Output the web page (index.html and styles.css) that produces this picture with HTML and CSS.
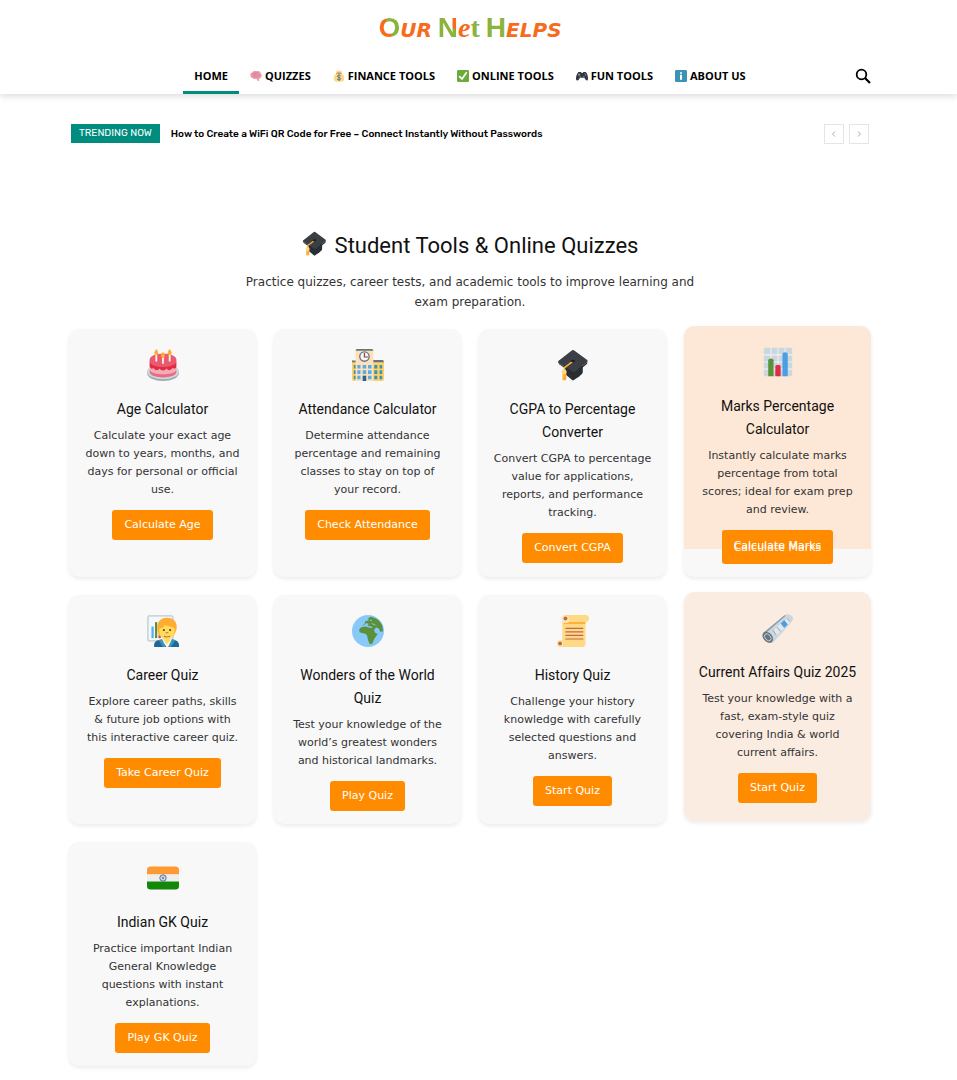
FILE: index.html
```
<!DOCTYPE html>
<html lang="en">
<head>
    <meta charset="UTF-8">
    <meta name="viewport" content="width=device-width, initial-scale=1.0">
    <title>Our Net Helps</title>
    <link rel="stylesheet" href="styles.css">
</head>
<body>
    <!-- Shared icons -->
    <svg class="sprite" aria-hidden="true">
        <symbol id="cap" viewBox="0 0 36 36">
            <path fill="#292f33" d="M9 20l9-6 11 5v7c0 2-2 3-4 5l-6 4q-1 1-2 0l-8-7z"/>
            <path fill="#3a3f45" d="M1.500 13.500 17 1.500q1-1 2 0l15 11q1 1 0 2L20 26q-1 1-2 0L2 16q-1.500-1-.5-2.500z"/>
            <path fill="#292f33" d="M2 16l16 10q1 1 2 0l14-11.500v2L20 28q-1 1-2 0L2 17z"/>
            <path fill="none" stroke="#ffac33" stroke-width="1.800" stroke-linecap="round" stroke-linejoin="round" d="M17 14.500 8.500 21v5"/>
            <path fill="#ffac33" d="M6.500 25h4v9q-2 2.500-4.500.500z"/>
            <circle cx="8" cy="26" r="2.800" fill="#ffd983"/>
            <ellipse cx="18" cy="13.500" rx="2.500" ry="1.500" fill="#1d2125"/>
        </symbol>
    </svg>

    <header class="header">
        <a class="logo" href="#"><span class="logo-o">O</span><span class="logo-small">UR</span> <span class="logo-n">N</span><span class="logo-e">e</span><span class="logo-t">t</span> <span class="logo-h">H</span><span class="logo-small">ELPS</span></a>
        <div class="menu-bar">
            <nav class="menu">
                <a class="active" href="#">HOME</a>
                <a href="#">
                    <svg viewBox="0 0 36 36"><path fill="#ea9aaa" d="M3 22C-1 16 1 9 7 7c3-5 9-5 13-3 6-2 11 1 12 6 4 4 4 9 1 12-1 4-4 5-7 4l2 6-5 1-4-7c-6 2-9 1-11-2-3 0-5-1-5-2z"/><path fill="none" stroke="#c56c83" stroke-width="2" d="M7 13c4-3 6 1 9-1s5-5 8-2M10 20c5-4 8 0 12-2s5-4 8-2M14 7l3 3"/></svg>
                    QUIZZES
                </a>
                <a href="#">
                    <svg viewBox="0 0 36 36"><path fill="#fdd888" d="M12 9C3 14 1 22 3 29c1 5 6 6 15 6s14-1 15-6c2-7 0-15-9-20l3-7-5 1-4-3-4 3-5-1z"/><path fill="#bf6952" d="M10 8h16v3H10z"/><path fill="none" stroke="#67757f" stroke-width="3" d="M23 18c-2-3-10-3-10 1s10 3 10 7-8 5-11 1M18 13v20"/></svg>
                    FINANCE TOOLS
                </a>
                <a href="#">
                    <svg viewBox="0 0 36 36"><rect width="36" height="36" rx="4" fill="#6aab3a"/><path fill="none" stroke="#fff" stroke-width="5" stroke-linecap="round" d="M8 20l7 7L28 8"/></svg>
                    ONLINE TOOLS
                </a>
                <a href="#">
                    <svg viewBox="0 0 36 36"><path fill="#31373d" d="M8 6h7l2 3h3l2-3h7c4 2 7 12 7 20 0 7-5 6-7 3l-4-6H12l-4 6c-3 4-8 3-8-3C0 18 4 8 8 6z"/><path stroke="#a9b5bd" stroke-width="2" d="M6 14h7M9 10v8"/><circle cx="26" cy="11" r="2" fill="#dd2e44"/><circle cx="29" cy="15" r="2" fill="#55acee"/><circle cx="13" cy="21" r="3" fill="#66757f"/><circle cx="23" cy="21" r="3" fill="#66757f"/></svg>
                    FUN TOOLS
                </a>
                <a href="#">
                    <svg viewBox="0 0 36 36"><rect width="36" height="36" rx="4" fill="#3b94b5"/><circle cx="18" cy="9" r="3" fill="#fff"/><path fill="#fff" d="M15 14h6v15h-6z"/></svg>
                    ABOUT US
                </a>
            </nav>
            <button class="search" type="button" aria-label="Search">
                <svg viewBox="0 0 16 16"><circle cx="6.500" cy="6.500" r="4.800" fill="none" stroke="#000" stroke-width="1.800"/><path stroke="#000" stroke-width="2.200" d="M10 10l5 5"/></svg>
            </button>
        </div>
    </header>

    <main class="content">
        <section class="trending">
            <span class="trending-label">TRENDING NOW</span>
            <a class="trending-title" href="#">How to Create a WiFi QR Code for Free – Connect Instantly Without Passwords</a>
            <div class="trending-nav">
                <button type="button" aria-label="Previous"><svg viewBox="0 0 8 8"><path d="M5 1.500 2.500 4 5 6.500"/></svg></button>
                <button type="button" aria-label="Next"><svg viewBox="0 0 8 8"><path d="M3 1.500 5.500 4 3 6.500"/></svg></button>
            </div>
        </section>

        <section class="tools">
            <h2><svg aria-hidden="true"><use href="#cap"/></svg>Student Tools &amp; Online Quizzes</h2>
            <p class="intro">Practice quizzes, career tests, and academic tools to improve learning and exam preparation.</p>

            <div class="grid">
                <article class="card">
                    <svg class="icon" viewBox="0 0 36 36">
                        <ellipse cx="18" cy="27" rx="18" ry="9" fill="#9aaab4"/>
                        <ellipse cx="18" cy="25.500" rx="18" ry="8.500" fill="#ccd6dd"/>
                        <path fill="#f4abba" d="M3 14h30v12c0 8-30 8-30 0z"/>
                        <path fill="#dd2e44" d="M3 24v2c0 8 30 8 30 0v-2c-3 6-27 6-30 0z" opacity=".5"/>
                        <path fill="#dd2e44" d="M3 15v5c1 2 3 3 4 1 2 3 5 4 7 1 2 3 6 3 8 0 2 3 5 2 7-1 2 2 4 1 4-2v-4c-5 6-25 6-30 0z"/>
                        <path fill="#ea596e" d="M3 12v3c3 7 27 7 30 0v-3z"/>
                        <ellipse cx="18" cy="12" rx="15" ry="7" fill="#ea596e"/>
                        <path stroke="#fff8e8" stroke-width="2" d="M10.500 6v8M18 8.500v8M25.500 6v8"/>
                        <path fill="#ffac33" d="M10.500 0C8 3 7 6 10.500 7 14 6 13 3 10.500 0zM18 3c-2.500 3-3.500 6 0 7 3.500-1 2.500-4 0-7zM25.500 0C23 3 22 6 25.500 7 29 6 28 3 25.500 0z"/>
                    </svg>
                    <h3>Age Calculator</h3>
                    <p>Calculate your exact age down to years, months, and days for personal or official use.</p>
                    <a class="btn" href="#">Calculate Age</a>
                </article>

                <article class="card">
                    <svg class="icon" viewBox="0 0 36 36">
                        <path fill="#ffd164" d="M0 14h36v20q0 2-2 2H2q-2 0-2-2z"/>
                        <path fill="#ffe0b8" d="M4 1h20v35H4z"/>
                        <path fill="#67757f" d="M5 0h18l1 2H4zM0 13h4v2H0zM24 12.500h11l1 2.500H24z"/>
                        <circle cx="14" cy="8.500" r="6" fill="#67757f"/><circle cx="14" cy="8.500" r="4.500" fill="#f5f8fa"/>
                        <path fill="none" stroke="#8b4a3a" stroke-width="1.400" d="M14 4.500v4.500h4"/>
                        <path fill="#55acee" d="M6 18h3.500v4H6zM12 18h4v4h-4zM18 18h4v4h-4zM6 24h3.500v4H6zM12 24h4v4h-4zM18 24h4v4h-4zM6 30h3.500v4H6zM18 30h4v4h-4z"/>
                        <path fill="#3b94b5" d="M2 18h2v4H2zM2 24h2v4H2zM2 30h2v4H2zM25 18h3.500v4H25zM31 18h3v4h-3zM25 24h3.500v4H25zM31 24h3v4h-3zM25 30h3.500v4H25zM31 30h3v4h-3z"/>
                        <path fill="#226699" d="M12 30h4v6h-4z"/>
                    </svg>
                    <h3>Attendance Calculator</h3>
                    <p>Determine attendance percentage and remaining classes to stay on top of your record.</p>
                    <a class="btn" href="#">Check Attendance</a>
                </article>

                <article class="card">
                    <svg class="icon"><use href="#cap"/></svg>
                    <h3>CGPA to Percentage Converter</h3>
                    <p>Convert CGPA to percentage value for applications, reports, and performance tracking.</p>
                    <a class="btn" href="#">Convert CGPA</a>
                </article>

                <article class="card card-marks">
                    <svg class="icon" viewBox="0 0 36 36">
                        <rect x="2" y="2" width="32" height="32" rx="2" fill="#ccd6dd"/>
                        <path stroke="#edf2f5" stroke-width="1.200" d="M2 10h32M2 18h32M2 26h32M10 2v32M18 2v32M26 2v32"/>
                        <path fill="#5c913b" d="M7 34V16q0-2 3-2t3 2v18z"/>
                        <path fill="#dd2e44" d="M15 34V23q0-2 3-2t3 2v11z"/>
                        <path fill="#4a9fe3" d="M23 34V9q0-2 3-2t3 2v25z"/>
                    </svg>
                    <h3>Marks Percentage Calculator</h3>
                    <p>Instantly calculate marks percentage from total scores; ideal for exam prep and review.</p>
                    <a class="btn" href="#">Calculate Marks</a>
                </article>

                <article class="card">
                    <svg class="icon" viewBox="0 0 36 36">
                        <rect x="1" y="1" width="28" height="28" rx="2" fill="#f5f8fa" stroke="#ccd6dd" stroke-width="2"/>
                        <path fill="#55acee" d="M5 13h2.500v13H5z"/><path fill="#5c913b" d="M9 8h2.500v18H9z"/><path fill="#dd2e44" d="M13 22h2.500v4H13z"/>
                        <path fill="#226699" d="M8 36v-3q1-5 7-5h14q6 0 7 5v3z"/>
                        <path fill="#f5f8fa" d="M16 28l6 8h2l5-8z"/>
                        <path fill="#ffdc5d" d="M19 23h7v6l-3.500 4-3.500-4z"/>
                        <path fill="#3b94b5" d="M13 28l5 8h3l-4-9zM32 28l-5 8h-3l4-9z"/>
                        <path fill="#ffac33" d="M12 19C10 8 15 3 22 3c8 0 13 5 11 14l-3 7H14z"/>
                        <path fill="#ffdc5d" d="M14 15c4 0 5-2 6-4 3 2 8 2 11 4 1 7-3 13-8.500 13S13 23 14 15z"/>
                        <circle cx="19" cy="17" r="1.200" fill="#664500"/><circle cx="26" cy="17" r="1.200" fill="#664500"/>
                        <path fill="none" stroke="#c1694f" stroke-width="1.200" d="M21 20h3M19 24q3.500 1.500 7 0"/>
                    </svg>
                    <h3>Career Quiz</h3>
                    <p>Explore career paths, skills &amp; future job options with this interactive career quiz.</p>
                    <a class="btn" href="#">Take Career Quiz</a>
                </article>

                <article class="card">
                    <svg class="icon" viewBox="0 0 36 36">
                        <circle cx="18" cy="18" r="18" fill="#88c9f9"/>
                        <path fill="#5c913b" d="M8 17c1-3 4-4 7-4l4 1 5 1 2 5 3 1-4 6-2 5-3 1-2-5-1-5-2-2-5-1c-2-1-2-2-2-3zM14 10l1-3 4-1-1-2 3-2c6 1 11 5 13 10l1 6-3 1-2-4-3-1-2 3-3-4-5-1 2-2-3-1-2 2-3 1z"/>
                        <path fill="#88c9f9" d="M20 5l3 1-2 1zM21 9l4 1 3 2-4-1zM26 16l3 4-1 1z"/>
                    </svg>
                    <h3>Wonders of the World Quiz</h3>
                    <p>Test your knowledge of the world’s greatest wonders and historical landmarks.</p>
                    <a class="btn" href="#">Play Quiz</a>
                </article>

                <article class="card">
                    <svg class="icon" viewBox="0 0 36 36">
                        <path fill="#ffd983" d="M6 4q0-4 4-4h22q4 0 4 4t-4 4v24q0 4-4 4H4q-4 0-4-4t4-4h2z"/>
                        <path fill="#ffac33" d="M8 8h24v2H8z"/><path fill="#ffe8b6" d="M6 5q0 4 4 4t4-4-4-4-4 4zM0 32q0 3.500 3.500 3.500T7 32t-3.500-3.500T0 32z"/>
                        <circle cx="9.500" cy="4" r="2.200" fill="#c1694f"/><circle cx="3.500" cy="32" r="2.200" fill="#c1694f"/>
                        <path stroke="#c1694f" stroke-width="1.400" stroke-linecap="round" d="M10 15h19M10 19h19M10 23h19M10 27h19"/>
                    </svg>
                    <h3>History Quiz</h3>
                    <p>Challenge your history knowledge with carefully selected questions and answers.</p>
                    <a class="btn" href="#">Start Quiz</a>
                </article>

                <article class="card card-hover">
                    <svg class="icon" viewBox="0 0 36 36">
                        <path fill="#ccd6dd" d="M1 24 25 4q3-2 6-1 4 1 4 5-1 3-3 5L13 34q-3 2-8-1-6-4-4-9z"/>
                        <path fill="#8899a6" d="M1 24 25 4l2 0L4 24z"/>
                        <path fill="#e1e8ed" d="M12 21 28 7l5 4-17 16z"/>
                        <ellipse cx="6.500" cy="28.500" rx="5" ry="7" transform="rotate(-42 6.500 28.500)" fill="#67757f"/>
                        <ellipse cx="6.500" cy="28.500" rx="3" ry="4.500" transform="rotate(-42 6.500 28.500)" fill="none" stroke="#ccd6dd"/>
                        <path fill="#4a9fe3" d="M21 13l4-4 4 5-4 4z"/>
                        <path stroke="#8899a6" stroke-width="1" d="M12 20l4 6M17 17l4 5M28 7l4 4"/>
                    </svg>
                    <h3>Current Affairs Quiz 2025</h3>
                    <p>Test your knowledge with a fast, exam-style quiz covering India &amp; world current affairs.</p>
                    <a class="btn" href="#">Start Quiz</a>
                </article>

                <article class="card">
                    <svg class="icon" viewBox="0 0 36 36">
                        <path fill="#ff9933" d="M0 14V9q0-4 4-4h28q4 0 4 4v5z"/>
                        <path fill="#eee" d="M0 14h36v8H0z"/>
                        <path fill="#138808" d="M0 22h36v5q0 4-4 4H4q-4 0-4-4z"/>
                        <circle cx="18" cy="18" r="3.600" fill="none" stroke="#3c5f91"/>
                        <circle cx="18" cy="18" r="1.300" fill="#3c5f91"/>
                        <path stroke="#8ea3c2" stroke-width=".5" d="M18 14.500v7M14.500 18h7M15.500 15.500l5 5M20.500 15.500l-5 5"/>
                    </svg>
                    <h3>Indian GK Quiz</h3>
                    <p>Practice important Indian General Knowledge questions with instant explanations.</p>
                    <a class="btn" href="#">Play GK Quiz</a>
                </article>
            </div>
        </section>
    </main>
</body>
</html>
```

FILE: styles.css
```
* {
    box-sizing: border-box;
}
body {
    margin: 0;
    background-color: #fff;
    font-family: Verdana, "DejaVu Sans", sans-serif;
    color: #333;
}
a {
    color: inherit;
    text-decoration: none;
}
h2, h3, p {
    margin: 0;
}
.sprite {
    display: none;
}

/* Header */
.header {
    padding: 0 86px 0 69px;
    box-shadow: 0 3px 6px rgba(0, 0, 0, 0.12);
}
.logo {
    display: flex;
    justify-content: center;
    align-items: baseline;
    height: 57px;
    padding-top: 10px;
    font-family: "Liberation Sans", Arial, sans-serif;
    font-size: 28px;
    font-weight: bold;
    line-height: 36px;
    color: #8bb33d;
}
.logo-small {
    font-family: "DejaVu Sans", sans-serif;
    font-size: 20px;
    font-style: italic;
    color: #f76b1c;
}
.logo-o, .logo-n {
    background: linear-gradient(70deg, #f76b1c 50%, #8bb33d 50%);
    background-clip: text;
    -webkit-background-clip: text;
    color: transparent;
}
.logo-n {
    margin-left: 6px;
    background-image: linear-gradient(45deg, #8bb33d 60%, #f76b1c 60%);
}
.logo-e {
    font-family: "Liberation Serif", serif;
    font-style: italic;
    color: #f76b1c;
}
.logo-t {
    font-family: "Liberation Serif", serif;
}
.logo-h {
    margin-left: 6px;
}
.menu-bar {
    display: grid;
    grid-template-columns: 1fr auto 1fr;
    align-items: center;
}
.menu {
    grid-column: 2;
    display: flex;
}
.menu a {
    display: flex;
    align-items: center;
    gap: 3px;
    height: 37px;
    padding: 3px 11px 0;
    border-bottom: 3px solid transparent;
    font-family: "Open Sans", sans-serif;
    font-size: 11px;
    font-weight: bold;
    color: #000;
    white-space: nowrap;
}
.menu a.active {
    border-color: #008d7f;
}
.menu svg {
    width: 12px;
    height: 12px;
}
.search {
    justify-self: end;
    padding: 0;
    border: none;
    background: none;
    cursor: pointer;
}
.search svg {
    display: block;
    width: 16px;
    height: 16px;
}

.content {
    padding: 30px 86px 13px 69px;
}

/* Trending */
.trending {
    display: flex;
    align-items: center;
    height: 19px;
    padding: 0 2px;
    font-family: Rubik, Roboto, sans-serif;
    font-size: 10px;
    font-weight: 500;
}
.trending-label {
    padding: 0 8px;
    background-color: #008d7f;
    color: #fff;
    font-weight: 400;
    line-height: 19px;
}
.trending-title {
    margin-left: 11px;
    color: #000;
}
.trending-nav {
    display: flex;
    gap: 5px;
    margin-left: auto;
}
.trending-nav button {
    display: flex;
    align-items: center;
    justify-content: center;
    width: 20px;
    height: 20px;
    padding: 0;
    border: 1px solid #e5e5e5;
    background: #fff;
    cursor: pointer;
}
.trending-nav svg {
    width: 8px;
    height: 8px;
    fill: none;
    stroke: #aaa;
}

/* Tools */
.tools {
    padding-top: 88px;
    text-align: center;
}
.tools h2 {
    display: flex;
    align-items: center;
    justify-content: center;
    gap: 8px;
    font-family: Roboto, sans-serif;
    font-size: 22px;
    font-weight: 400;
    line-height: 30px;
    color: #111;
}
.tools h2 svg {
    width: 25px;
    height: 25px;
    margin-bottom: 5px;
}
.intro {
    max-width: 480px;
    margin: 11px auto 17px;
    font-size: 12px;
    line-height: 20px;
}
.grid {
    display: grid;
    grid-template-columns: repeat(4, 1fr);
    gap: 18px;
}
.card {
    padding: 14px 14px 13px;
    border-radius: 10px;
    background-color: #f8f8f8;
    box-shadow: 0 2px 4px rgba(0, 0, 0, 0.08);
}
.icon {
    display: block;
    width: 32px;
    height: 32px;
    margin: 6px auto 17px;
}
.card h3 {
    font-family: Roboto, sans-serif;
    font-size: 14px;
    font-weight: 400;
    line-height: 23px;
    color: #111;
}
.card p {
    margin: 6px 0 11px;
    font-size: 11px;
    line-height: 18px;
}
.btn {
    display: inline-block;
    padding: 0 12px;
    border-radius: 3px;
    background-color: #ff8c00;
    color: #fff;
    font-size: 11px;
    line-height: 30px;
    vertical-align: top;
}
.btn:hover {
    background-color: #e67e00;
}
.card-marks {
    margin-top: -3px;
    background-image: linear-gradient(#fde8d7 223px, #f8f8f8 223px);
}
.card-marks .btn {
    padding: 1px 12px 3px;
    text-shadow: 0 2px 0 #fff;
}
.card-hover {
    margin: -3px 0 3px;
    background-color: #fbece1;
}
```
